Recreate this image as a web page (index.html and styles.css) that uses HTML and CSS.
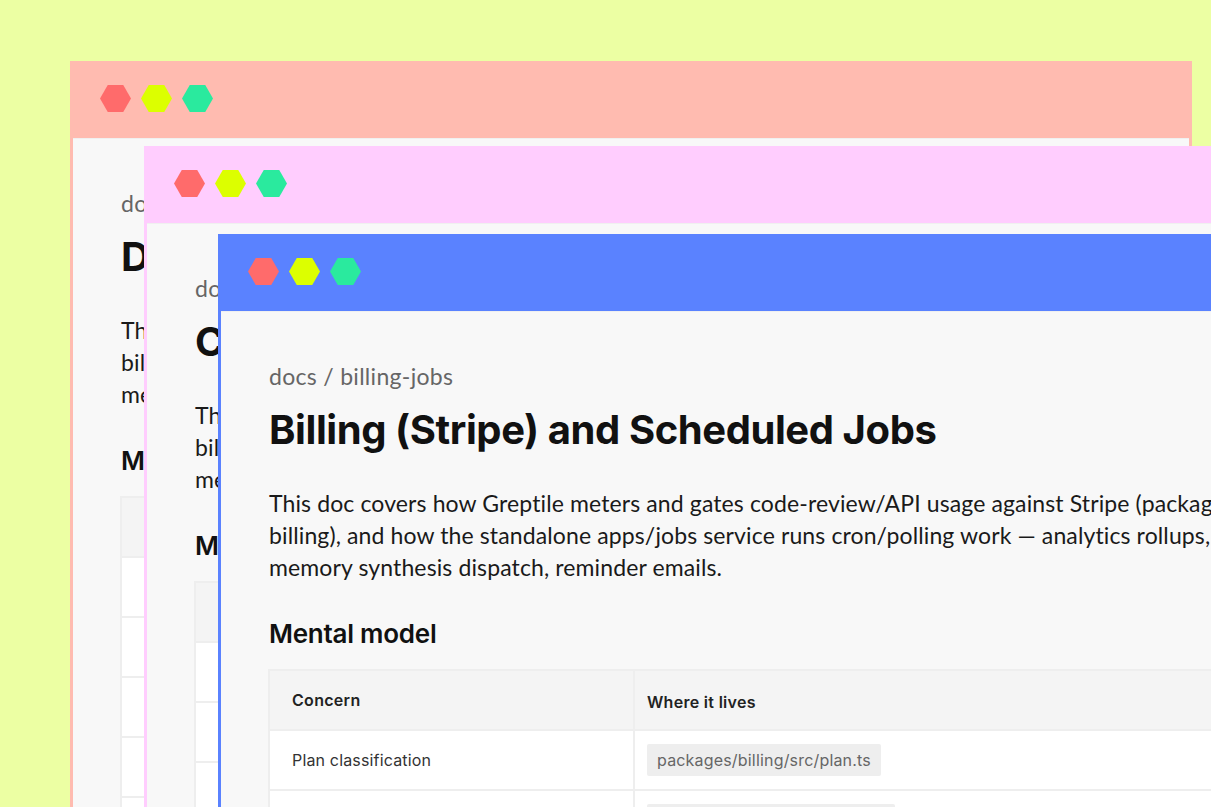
FILE: index.html
```html
<!DOCTYPE html>
<html lang="en">
<head>
<meta charset="utf-8">
<title>Docs windows</title>
<link rel="stylesheet" href="styles.css">
</head>
<body>
<main class="canvas">
  <section class="window window-coral">
    <header class="titlebar"><i class="hex hex-red"></i><i class="hex hex-lime"></i><i class="hex hex-green"></i></header>
    <div class="doc">
      <div class="crumb">docs / deployment</div>
      <h1 class="title">Deployment and Infrastructure</h1>
      <p class="lead">This doc covers how Greptile is deployed and how its services fit together across<br>billing, the API layer and the worker fleet, and what runs where in<br>memory and on disk.</p>
      <h2 class="subtitle">Mental model</h2>
      <table class="grid">
        <tr><th>Concern</th><th class="alt">Where it lives</th></tr>
        <tr><td>Services</td><td><code>apps/</code></td></tr>
        <tr><td>Infrastructure</td><td><code>infra/</code></td></tr>
        <tr><td>Pipelines</td><td><code>.github/workflows</code></td></tr>
        <tr><td>Images</td><td><code>docker/</code></td></tr>
        <tr><td>Secrets</td><td><code>infra/secrets</code></td></tr>
      </table>
    </div>
  </section>
  <section class="window window-pink">
    <header class="titlebar"><i class="hex hex-red"></i><i class="hex hex-lime"></i><i class="hex hex-green"></i></header>
    <div class="doc">
      <div class="crumb">docs / code-review</div>
      <h1 class="title">Code Review Pipeline</h1>
      <p class="lead">This doc covers how Greptile reviews a pull request from webhook to comment,<br>billing hooks included, and how the stages hand work to each other across<br>memory and indexing.</p>
      <h2 class="subtitle">Mental model</h2>
      <table class="grid">
        <tr><th>Concern</th><th class="alt">Where it lives</th></tr>
        <tr><td>Webhooks</td><td><code>apps/web</code></td></tr>
        <tr><td>Review</td><td><code>apps/review</code></td></tr>
        <tr><td>Indexing</td><td><code>apps/index</code></td></tr>
        <tr><td>Comments</td><td><code>packages/comments</code></td></tr>
      </table>
    </div>
  </section>
  <section class="window window-blue">
    <header class="titlebar"><i class="hex hex-red"></i><i class="hex hex-lime"></i><i class="hex hex-green"></i></header>
    <div class="doc">
      <div class="crumb">docs / billing-jobs</div>
      <h1 class="title">Billing (Stripe) and Scheduled Jobs</h1>
      <p class="lead">This doc covers how Greptile meters and gates code-review/API usage against Stripe (packages/<br>billing), and how the standalone apps/jobs service runs cron/polling work — analytics rollups,<br>memory synthesis dispatch, reminder emails.</p>
      <h2 class="subtitle">Mental model</h2>
      <table class="grid">
        <tr><th>Concern</th><th class="alt">Where it lives</th></tr>
        <tr><td>Plan classification</td><td><code>packages/billing/src/plan.ts</code></td></tr>
        <tr><td>Usage metering</td><td><code>packages/billing/src/usage.ts</code></td></tr>
        <tr><td>Scheduled jobs</td><td><code>apps/jobs/src/index.ts</code></td></tr>
      </table>
    </div>
  </section>
</main>
</body>
</html>
```
FILE: styles.css
```css
* { box-sizing: border-box; }
html, body { margin: 0; height: 100%; }
body { background: #ecffa3; overflow: hidden; }
.canvas { position: relative; width: 1211px; height: 807px; overflow: hidden; }
.window { position: absolute; width: 1122px; height: 900px; padding: 0 3px 3px; background: #f8f8f8; }
.window-coral { left: 70px; top: 61px; background: #ffbbb0; }
.window-pink { left: 144px; top: 146px; background: #ffcdfe; }
.window-blue { left: 218px; top: 234px; background: #5a82ff; }
.titlebar { display: flex; align-items: center; gap: 10px; height: 77px; padding-left: 27px; padding-bottom: 2px; }
.hex { display: block; width: 31px; height: 27px; clip-path: polygon(25% 0, 75% 0, 100% 50%, 75% 100%, 25% 100%, 0 50%); }
.hex-red { background: #ff6b6b; }
.hex-lime { background: #dcff00; }
.hex-green { background: #2aea9e; }
.doc { height: 100%; padding: 48px 48px 0; background: #f8f8f8; border-top: 1px solid #f0f0f0; font-family: "Lato", sans-serif; }
.crumb { font-size: 23px; line-height: 32px; color: #666; letter-spacing: 0.3px; }
.title { margin: 13px 0 0; font-family: "Inter", sans-serif; font-size: 40px; line-height: 50px; font-weight: 700; color: #111; letter-spacing: -0.42px; white-space: nowrap; }
.lead { margin: 32px 0 0; font-size: 23px; line-height: 32px; color: #1a1a1a; letter-spacing: 0.12px; white-space: nowrap; }
.subtitle { margin: 35px 0 0; font-family: "Inter", sans-serif; font-size: 26px; line-height: 32px; font-weight: 600; color: #111; letter-spacing: -0.25px; white-space: nowrap; }
.grid { margin: 19px 0 0 -1px; width: 1020px; border-collapse: collapse; table-layout: fixed; font-family: "Inter", sans-serif; font-size: 16px; background: #fff; }
.grid th, .grid td { height: 60px; border: 2px solid #eee; text-align: left; padding: 0 22px; color: #333; letter-spacing: 0.16px; }
.grid th:first-child, .grid td:first-child { width: 365px; }
.grid td + td, .grid th + th { padding-left: 12px; }
.grid th { background: #f4f4f4; font-weight: 600; font-size: 16px; color: #222; letter-spacing: 0.3px; }
.grid .alt { padding-top: 4px; }
.grid code { display: inline-block; padding: 5px 10px; background: #eee; border-radius: 2px; color: #666; font-family: "Inter", sans-serif; font-size: 16px; line-height: 22px; letter-spacing: 0.18px; }
```
